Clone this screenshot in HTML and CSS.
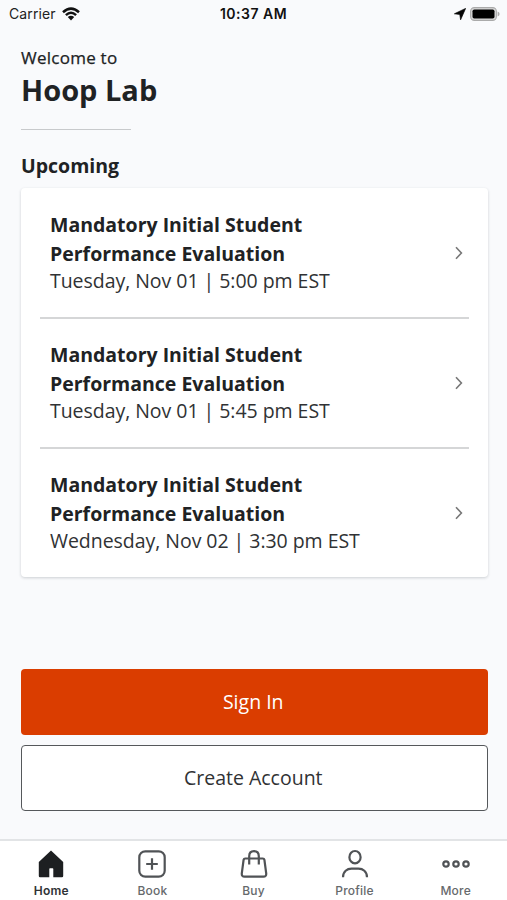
FILE: index.html
```html
<!DOCTYPE html>
<html lang="en">
<head>
<meta charset="utf-8">
<title>Hoop Lab</title>
<link rel="stylesheet" href="styles.css">
</head>
<body>
<div class="app">
  <header class="status">
    <div class="carrier"><span>Carrier</span>
      <svg width="18" height="14" viewBox="0 0 18 14" fill="none" stroke="#111" stroke-width="2.5"><path d="M1 5.2Q9-2 17 5.2M3.9 8.1Q9 3.4 14.1 8.1"/><path d="M5.8 10.1Q9 7.4 12.2 10.1L9 13.4Z" fill="#111" stroke="none"/></svg>
    </div>
    <div class="clock">10:37 AM</div>
    <div class="indicators">
      <svg width="12" height="12" viewBox="0 0 12 12"><path d="M11.6.4L.4 5.8L5.8 6.4L6.6 11.8Z" fill="#050505" stroke="#050505" stroke-width=".7" stroke-linejoin="round"/></svg>
      <svg width="30" height="14" viewBox="0 0 30 14"><rect x=".6" y=".6" width="25.8" height="12.8" rx="3.8" fill="#d8d8d8" stroke="#aaa" stroke-width="1.1"/><rect x="2.5" y="2.5" width="22" height="9" rx="1.8"/><path d="M27.6 4.6Q29.6 5.4 29.6 7T27.6 9.4Z" fill="#aaa"/></svg>
    </div>
  </header>
  <main class="content">
    <p class="welcome">Welcome to</p>
    <h1 class="title">Hoop Lab</h1>
    <div class="rule"></div>
    <h2 class="section">Upcoming</h2>
    <ul class="card">
      <li class="event"><div><h3>Mandatory Initial Student<br>Performance Evaluation</h3><p>Tuesday, Nov 01 | 5:00 pm EST</p></div><svg class="chevron" width="8" height="14" viewBox="0 0 8 14"><path d="M1 1.2L6.4 7L1 12.8"/></svg></li>
      <li class="event"><div><h3>Mandatory Initial Student<br>Performance Evaluation</h3><p>Tuesday, Nov 01 | 5:45 pm EST</p></div><svg class="chevron" width="8" height="14" viewBox="0 0 8 14"><path d="M1 1.2L6.4 7L1 12.8"/></svg></li>
      <li class="event"><div><h3>Mandatory Initial Student<br>Performance Evaluation</h3><p>Wednesday, Nov 02 | 3:30 pm EST</p></div><svg class="chevron" width="8" height="14" viewBox="0 0 8 14"><path d="M1 1.2L6.4 7L1 12.8"/></svg></li>
    </ul>
    <div class="actions">
      <button class="button primary">Sign In</button>
      <button class="button secondary">Create Account</button>
    </div>
  </main>
  <nav class="tabs">
    <a class="tab active"><svg viewBox="0 0 30 30"><path d="M15 1.4L27.2 13V27Q27.2 28.2 26 28.2H17.3V20Q17.3 19.3 16.6 19.3H14Q13.3 19.3 13.3 20V28.2H4Q2.8 28.2 2.8 27V13Z" fill="#1d1f21" stroke="none"/></svg><span>Home</span></a>
    <a class="tab"><svg viewBox="0 0 30 30"><rect x="2.3" y="2.3" width="25.4" height="25.4" rx="6"/><path d="M15 9.2V20.8M9.2 15H20.8"/></svg><span>Book</span></a>
    <a class="tab"><svg viewBox="0 0 30 30"><path d="M6.2 9.5H23.8Q25.1 9.5 25.4 10.8L27.2 24.4Q27.5 27.7 24.4 27.7H5.6Q2.5 27.7 2.8 24.4L4.6 10.8Q4.9 9.5 6.2 9.5ZM10.2 15.6V7.2Q10.2 2.2 15 2.2T19.8 7.2V15.6"/></svg><span>Buy</span></a>
    <a class="tab"><svg viewBox="0 0 30 30"><ellipse cx="15" cy="8.2" rx="5.6" ry="6.2"/><path d="M3 28.2C3 22.5 7.2 19.6 11.5 19.6H18.5C22.8 19.6 27 22.5 27 28.2"/></svg><span>Profile</span></a>
    <a class="tab"><svg viewBox="0 0 30 30"><circle cx="5" cy="15" r="2.7"/><circle cx="15" cy="15" r="2.7"/><circle cx="25" cy="15" r="2.7"/></svg><span>More</span></a>
  </nav>
</div>
</body>
</html>
```
FILE: styles.css
```css
* { box-sizing: border-box; }
body, h1, h2, h3, p, ul { margin: 0; padding: 0; }
body { background: #f9fafc; color: #202224; font-family: "Open Sans", "Noto Sans", sans-serif; }
.app { height: 900px; display: flex; flex-direction: column; overflow: hidden; }
.status { height: 28px; padding: 0 7px 0 9px; display: grid; grid-template-columns: 1fr auto 1fr; align-items: center; font: 14px/28px Inter, sans-serif; color: #222; }
.carrier { display: flex; align-items: center; gap: 6px; letter-spacing: .1px; }
.clock { font-weight: 600; letter-spacing: .5px; color: #111; margin-left: -2px; }
.indicators { display: flex; align-items: center; justify-content: flex-end; gap: 4px; }
.content { flex: 1; padding: 16px 19px 0 20px; }
.welcome { font-size: 17px; line-height: 28px; letter-spacing: .25px; padding-left: 1px; -webkit-text-stroke: .25px #202224; }
.title { font-size: 29px; line-height: 36px; font-weight: 700; padding-left: 1px; }
.rule { width: 110px; height: 1px; margin: 21px 0 21px 1px; background: #c8cacc; }
.section { font-size: 19.5px; line-height: 29px; font-weight: 700; height: 37px; padding-left: 1px; }
.card { list-style: none; height: 389px; margin: 0 0 0 .5px; padding: 0 19.5px; border-radius: 4px; background: #fff; box-shadow: 0 1px 3px rgba(30, 40, 50, .2); }
.event { height: 130px; padding: 0 6px 2px 10px; display: flex; align-items: center; justify-content: space-between; border-bottom: 2px solid #d5d6d7; }
.event:first-child { height: 131px; }
.event:last-child { border-bottom: 0; height: 128px; }
.event h3 { font-size: 19.5px; line-height: 29px; font-weight: 700; }
.event p { font-size: 19.5px; line-height: 26px; letter-spacing: -.04px; color: #303234; }
.chevron { margin-top: 2px; fill: none; stroke: #777; stroke-width: 1.6; }
.actions { margin: 92px 0 0 .5px; display: flex; flex-direction: column; gap: 10px; }
.button { height: 66px; padding-bottom: 2px; padding-right: 8px; border-radius: 4px; font: 19.5px "Open Sans", "Noto Sans", sans-serif; }
.primary { background: #da3d00; border: 0; color: #fff; }
.secondary { background: #fff; border: 1.5px solid #55585b; color: #303234; }
.tabs { height: 61px; display: grid; grid-template-columns: repeat(5, 101.1px); justify-content: center; border-top: 2px solid #e2e4e6; background: #fff; }
.tab { display: flex; flex-direction: column; align-items: center; padding-top: 8px; font: 500 12px/16px Inter, sans-serif; letter-spacing: .2px; color: #66696c; }
.tab svg { width: 30px; height: 30px; margin-bottom: 4px; fill: none; stroke: #505356; stroke-width: 2.2; }
.tab.active { color: #303336; font-weight: 600; }
```
